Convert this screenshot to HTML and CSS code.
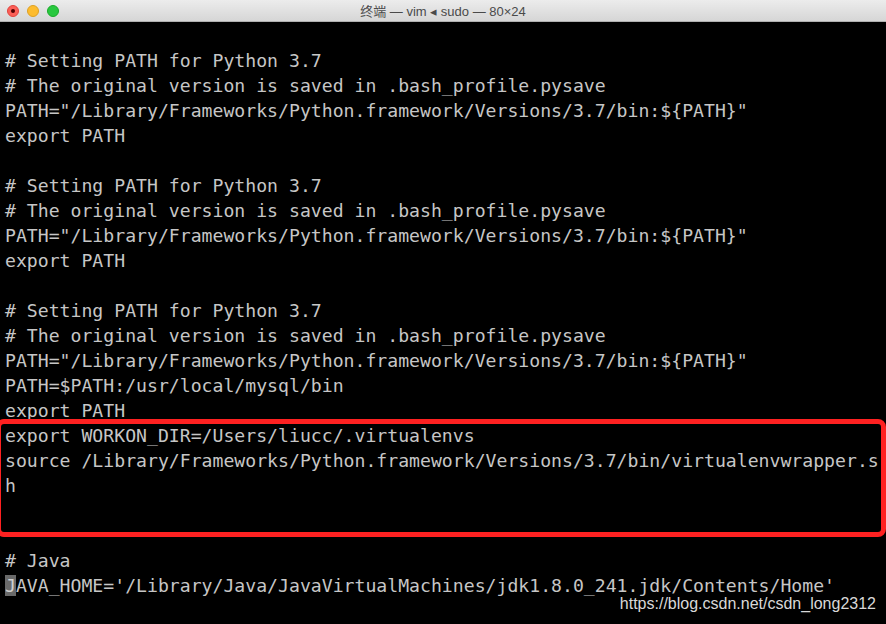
FILE: index.html
```html
<!DOCTYPE html>
<html lang="zh">
<head>
<meta charset="UTF-8">
<title>终端 — vim ◂ sudo — 80×24</title>
<link rel="stylesheet" href="styles.css">
</head>
<body>
<div class="window">
    <div class="titlebar">
        <div class="lights">
            <span class="light red"><span class="dot"></span></span>
            <span class="light yellow"></span>
            <span class="light green"></span>
        </div>
        <div class="title">终端 — vim ◂ sudo — 80×24</div>
    </div>
    <div class="screen">
<pre class="term">

# Setting PATH for Python 3.7
# The original version is saved in .bash_profile.pysave
PATH="/Library/Frameworks/Python.framework/Versions/3.7/bin:${PATH}"
export PATH

# Setting PATH for Python 3.7
# The original version is saved in .bash_profile.pysave
PATH="/Library/Frameworks/Python.framework/Versions/3.7/bin:${PATH}"
export PATH

# Setting PATH for Python 3.7
# The original version is saved in .bash_profile.pysave
PATH="/Library/Frameworks/Python.framework/Versions/3.7/bin:${PATH}"
PATH=$PATH:/usr/local/mysql/bin
export PATH
export WORKON_DIR=/Users/liucc/.virtualenvs
source /Library/Frameworks/Python.framework/Versions/3.7/bin/virtualenvwrapper.s
h


# Java
<span class="cursor">J</span>AVA_HOME='/Library/Java/JavaVirtualMachines/jdk1.8.0_241.jdk/Contents/Home'
</pre>
        <div class="highlight"></div>
        <div class="watermark">https://blog.csdn.net/csdn_long2312</div>
    </div>
</div>
</body>
</html>
```

FILE: styles.css
```css
html, body {
    margin: 0;
    padding: 0;
    background-color: #000;
    overflow: hidden;
}

.window {
    width: 886px;
    height: 624px;
    display: flex;
    flex-direction: column;
}

.titlebar {
    height: 22px;
    flex: 0 0 22px;
    background: linear-gradient(#ececec, #d6d6d6);
    border-bottom: 1px solid #b0b0b0;
    box-sizing: border-box;
    position: relative;
    display: flex;
    align-items: center;
    justify-content: center;
}

.lights {
    position: absolute;
    left: 7px;
    top: 5px;
    display: flex;
    gap: 8px;
}

.light {
    width: 12px;
    height: 12px;
    border-radius: 50%;
    box-sizing: border-box;
    display: flex;
    align-items: center;
    justify-content: center;
}

.light.red {
    background-color: #fc5f57;
    border: 1px solid #e0443e;
}

.light.yellow {
    background-color: #fdbc2e;
    border: 1px solid #dea123;
}

.light.green {
    background-color: #29c840;
    border: 1px solid #1aab29;
}

.dot {
    width: 4px;
    height: 4px;
    border-radius: 50%;
    background-color: #4d0000;
}

.title {
    font-family: "Liberation Sans", "Noto Sans CJK SC", sans-serif;
    font-size: 13px;
    color: #4a4a4a;
}

.screen {
    flex: 1;
    position: relative;
    background-color: #000;
}

.term {
    margin: 0;
    padding: 1px 0 0 5px;
    font-family: "DejaVu Sans Mono", monospace;
    font-size: 18.15px;
    line-height: 25px;
    color: #c6c6c6;
    white-space: pre;
}

.cursor {
    background-color: #6a6a6a;
    color: #d0d0d0;
}

.highlight {
    position: absolute;
    left: -4px;
    top: 397px;
    width: 880px;
    height: 108px;
    border: 5px solid #fe2121;
    border-radius: 8px;
}

.watermark {
    position: absolute;
    right: 10px;
    top: 573px;
    font-family: "Liberation Sans", Arial, sans-serif;
    font-size: 16px;
    color: #d8d8d8;
}
```
